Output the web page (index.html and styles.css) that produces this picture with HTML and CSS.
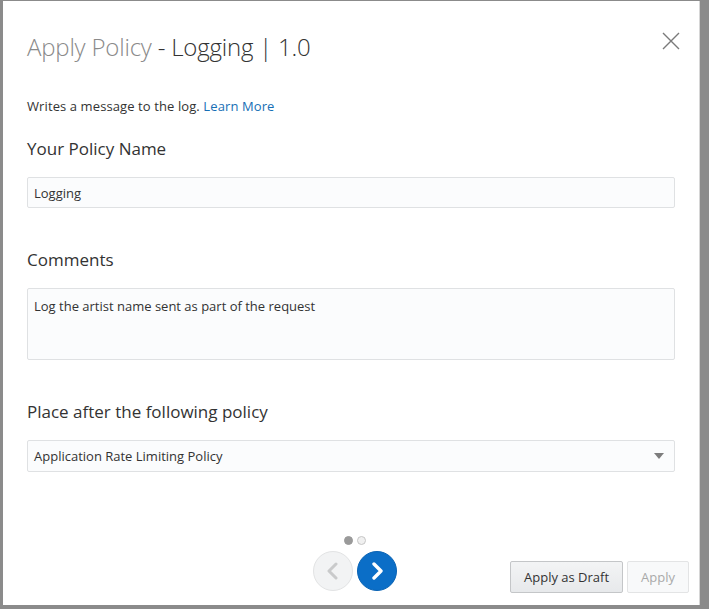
FILE: index.html
```html
<!DOCTYPE html>
<html lang="en">
<head>
<meta charset="utf-8">
<title>Apply Policy - Logging</title>
<link rel="stylesheet" href="styles.css">
</head>
<body>
<div class="dialog">
  <div class="header">
    <h1 class="title"><span class="title-muted">Apply Policy</span> - Logging | 1.0</h1>
    <button class="close" aria-label="Close">
      <svg width="18" height="18" viewBox="0 0 18 18"><path d="M1 1 L17 17 M17 1 L1 17" stroke="#7a7a7a" stroke-width="1.4" fill="none"/></svg>
    </button>
  </div>
  <p class="desc">Writes a message to the log. <a href="#" class="link">Learn More</a></p>

  <label class="label label-first">Your Policy Name</label>
  <div class="field field-input">Logging</div>

  <label class="label">Comments</label>
  <div class="field field-area">Log the artist name sent as part of the request</div>

  <label class="label">Place after the following policy</label>
  <div class="field field-select">
    <span>Application Rate Limiting Policy</span>
    <svg class="caret" width="10" height="6" viewBox="0 0 10 6"><path d="M0 0 H10 L5 6 Z" fill="#7d7d7d"/></svg>
  </div>

  <div class="footer">
    <div class="spacer"></div>
    <div class="nav">
      <div class="dots"><span class="dot dot-on"></span><span class="dot"></span></div>
      <div class="arrows">
        <button class="circle circle-prev" aria-label="Previous">
          <svg width="14" height="18" viewBox="0 0 14 18"><path d="M10 2 L3 9 L10 16" stroke="#c9cacb" stroke-width="3" fill="none" stroke-linecap="round" stroke-linejoin="round"/></svg>
        </button>
        <button class="circle circle-next" aria-label="Next">
          <svg width="14" height="18" viewBox="0 0 14 18"><path d="M4 2 L11 9 L4 16" stroke="#ffffff" stroke-width="3.4" fill="none" stroke-linecap="round" stroke-linejoin="round"/></svg>
        </button>
      </div>
    </div>
    <div class="actions">
      <button class="btn btn-draft">Apply as Draft</button>
      <button class="btn btn-apply">Apply</button>
    </div>
  </div>
</div>
</body>
</html>
```

FILE: styles.css
```css
html, body {
  margin: 0;
  padding: 0;
  height: 100%;
}
body {
  background: #8b8b8b;
  font-family: "Open Sans", "Noto Sans", sans-serif;
  color: #333;
  overflow: hidden;
}
.dialog {
  box-sizing: border-box;
  margin: 1px 0 0 3px;
  width: 697px;
  height: 604px;
  background: #fff;
  border-right: 1px solid #d6d6d6;
  padding: 0 24px;
  display: flex;
  flex-direction: column;
}
.header {
  margin-top: 30px;
  display: flex;
  justify-content: space-between;
  align-items: center;
  height: 32px;
}
.title {
  margin: 0;
  font-size: 24px;
  line-height: 32px;
  font-weight: 300;
  color: #333;
  letter-spacing: -0.2px;
}
.title-muted {
  color: #8a8a8a;
}
.close {
  background: none;
  border: 0;
  padding: 0;
  margin-right: -5px;
  margin-top: -12px;
  width: 18px;
  height: 18px;
  display: flex;
}
.desc {
  margin: 34px 0 0;
  font-size: 13px;
  line-height: 18px;
  color: #333;
  letter-spacing: 0.1px;
}
.link {
  color: #176fb5;
  text-decoration: none;
}
.label {
  display: block;
  margin-top: 40px;
  font-size: 17px;
  line-height: 24px;
  color: #333;
}
.label-first {
  margin-top: 22px;
}
.field {
  box-sizing: border-box;
  margin-top: 16px;
  background: #fbfcfd;
  border: 1px solid #dfe1e3;
  border-radius: 2px;
  font-size: 13px;
  line-height: 18px;
  color: #333;
  padding: 6px 6px;
}
.field-input {
  height: 31px;
}
.field-area {
  height: 72px;
  padding-top: 8px;
}
.field-select {
  height: 32px;
  margin-top: 16px;
  display: flex;
  align-items: center;
  justify-content: space-between;
  padding-right: 10px;
}
.footer {
  margin: 64px -14px 0 -7px;
  display: grid;
  grid-template-columns: 1fr auto 1fr;
  align-items: end;
}
.nav {
  display: flex;
  flex-direction: column;
  align-items: center;
}
.dots {
  display: flex;
  gap: 4px;
  margin-left: 1px;
}
.dot {
  width: 9px;
  height: 9px;
  border-radius: 50%;
  background: #f0f0f0;
  border: 1px solid #c6c6c6;
  box-sizing: border-box;
}
.dot-on {
  background: #9a9a9a;
  border-color: #9a9a9a;
}
.arrows {
  display: flex;
  gap: 4px;
  margin-top: 6px;
}
.circle {
  width: 40px;
  height: 40px;
  border-radius: 50%;
  padding: 0;
  display: flex;
  align-items: center;
  justify-content: center;
  box-sizing: border-box;
}
.circle-prev {
  background: #f2f3f4;
  border: 1px solid #e2e3e4;
}
.circle-next {
  background: #0b6ec7;
  border: 1px solid #0a63b4;
}
.actions {
  display: flex;
  justify-content: flex-end;
  gap: 4px;
  margin-bottom: -2px;
}
.btn {
  font-family: "Open Sans", "Noto Sans", sans-serif;
  font-size: 13px;
  height: 32px;
  border-radius: 2px;
  padding: 0 13px;
}
.btn-draft {
  background: linear-gradient(#f3f4f5, #e7e9eb);
  border: 1px solid #c4c6c8;
  color: #333;
}
.btn-apply {
  background: #f8f9fa;
  border: 1px solid #e3e4e5;
  color: #a9a9a9;
}
```
